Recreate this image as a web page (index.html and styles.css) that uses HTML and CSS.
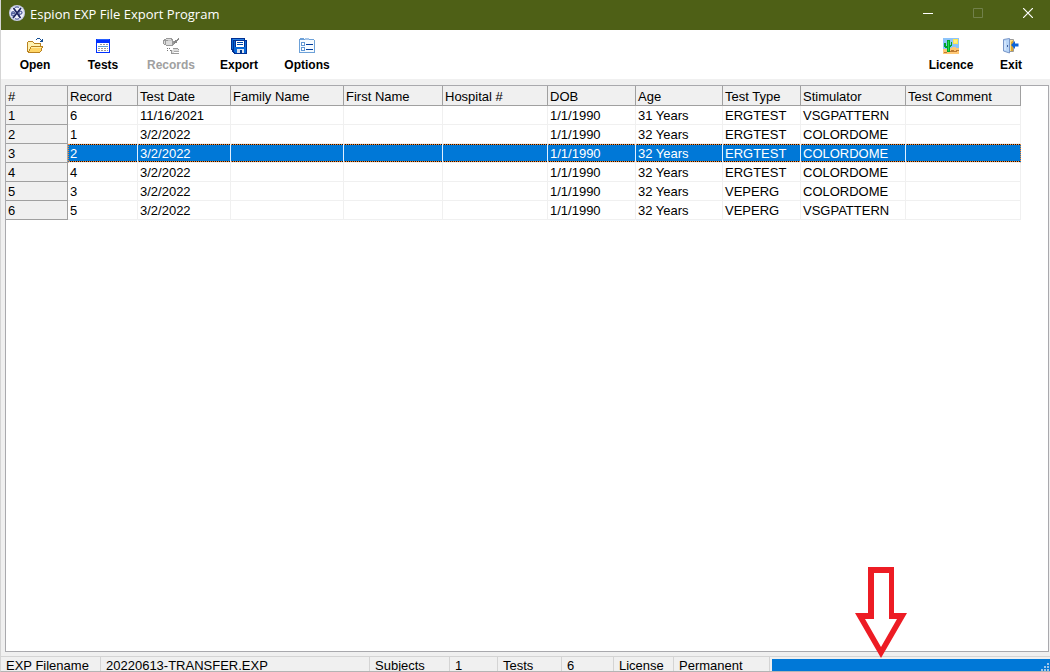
FILE: index.html
```html
<!DOCTYPE html>
<html lang="en">
<head>
    <meta charset="UTF-8">
    <meta name="viewport" content="width=device-width, initial-scale=1.0">
    <title>Espion EXP File Export Program</title>
    <link rel="stylesheet" href="styles.css">
</head>
<body>
    <div class="window">
        <header class="titlebar">
            <svg class="app-icon" width="16" height="16" viewBox="0 0 16 16">
                <circle cx="8" cy="8" r="8" fill="#c8cde8"/>
                <circle cx="8" cy="8" r="6.8" fill="#f0f2fb"/>
                <g fill="none" stroke="#5563a0" stroke-width="1.3">
                    <path d="M2.5 8.500h3.200c0-2.500-3.200-2.500-3.200.3s2.200 2.200 3.200 1.200M10 11.500V5.500M10 6.500c3.500-1.500 4.500 3 0 3M6 2.500c1.500-1 2.500-1 4 0M6 13.500c1.500 1 2.500 1 4 0"/>
                    <path d="M4.500 3l7 10M12 3L4 13" stroke="#1e2560" stroke-width="1.7"/>
                </g>
            </svg>
            <h1 class="title">Espion EXP File Export Program</h1>
            <div class="window-buttons">
                <button type="button" aria-label="Minimize">
                    <svg width="10" height="10" viewBox="0 0 10 10"><path d="M0 5.5h10" stroke="#fff"/></svg>
                </button>
                <button type="button" aria-label="Maximize" disabled>
                    <svg width="10" height="10" viewBox="0 0 10 10"><path d="M.5.5h9v9h-9z" fill="none" stroke="#71804a"/></svg>
                </button>
                <button type="button" aria-label="Close">
                    <svg width="10" height="10" viewBox="0 0 10 10"><path d="M0 0l10 10M10 0L0 10" stroke="#fff" stroke-width="1.2"/></svg>
                </button>
            </div>
        </header>

        <nav class="toolbar">
            <button type="button" class="tool">
                <svg width="16" height="16" viewBox="0 0 16 16" shape-rendering="crispEdges">
                    <path d="M10 0h3v1h1v1h1V1h1v3h-3V3h1V2h-1V1h-3v1H9V1h1z" fill="#164f94"/>
                    <path d="M1 3h5v1h1v1h7v3h2v2h-1v3h-1v1h-1v1H1v-1H0V4h1z" fill="#b98220"/>
                    <path d="M1 4h5v1h1v1h6v2H4v1H3v2H2v2H1z" fill="#fff2b0"/>
                    <path d="M4 9h11v1h-1v3h-1v1H2v-1h1v-2h1z" fill="#ffd566"/>
                    <path d="M4 9h10v1H4z" fill="#fff0a8"/>
                </svg>
                <span>Open</span>
            </button>
            <button type="button" class="tool">
                <svg width="16" height="16" viewBox="0 0 16 16" shape-rendering="crispEdges">
                    <path d="M1 1h14v14H1z" fill="#0030ff"/>
                    <path d="M2 5h12v9H2z" fill="#fff"/>
                    <path d="M5 6.500h8M3 10.500h10M3 12.500h10" stroke="#999" stroke-dasharray="2 1"/>
                    <path d="M3 8.500h10" stroke="#5b9bd5"/>
                    <path d="M2 1h12v1H2z" fill="#2860ff"/>
                </svg>
                <span>Tests</span>
            </button>
            <button type="button" class="tool" disabled>
                <svg width="16" height="16" viewBox="0 0 16 16" shape-rendering="crispEdges">
                    <path d="M3 0h6v1h1v2h1v4h-1v1H3V7H1V6H0V2h1V1h2z" fill="#999"/>
                    <path d="M3 1h5v1H3zM1 3h1v3H1zM3 3h6v4H3z" fill="#dcdcdc"/>
                    <path d="M5 2h4v1H5z" fill="#c4c4c4"/>
                    <path d="M15 0h1v2h-1v1h-1v2h-2v1h-1V3h1V2h2V1h1z" fill="#888"/>
                    <path d="M4 10h1v1H4zM6 10h1v1H6zM7 12h1v1H7zM4 12h1v1H4z" fill="#777"/>
                    <path d="M10 10h5v1h1v1h-1v-1h-5v1H9v3h7v1H8v-4h2z" fill="#999"/>
                    <path d="M10 11h5v1h1v1h-5v2H9v-3h1z" fill="#dcdcdc"/>
                    <path d="M11 13h5v1h-5z" fill="#aaa"/>
                </svg>
                <span>Records</span>
            </button>
            <button type="button" class="tool">
                <svg width="16" height="16" viewBox="0 0 16 16" shape-rendering="crispEdges">
                    <path d="M0 0h14v2h2v14H3v-1H2v-1H1v-2H0z" fill="#002f91"/>
                    <path d="M1 1h1v10H1zM3 3h1v11H3zM4 9h11v6H4z" fill="#0868d8"/>
                    <path d="M2 1h11v1H2z" fill="#2b83e6"/>
                    <path d="M5 3h8v6H5z" fill="#fff"/>
                    <path d="M6 4.500h6M6 6.500h6" stroke="#0048ad"/>
                    <path d="M6 11h7v4H6z" fill="#dce2ee"/>
                    <path d="M9 12h2v3H9z" fill="#00398f"/>
                    <path d="M14 3h1v6h-1z" fill="#0868d8"/>
                </svg>
                <span>Export</span>
            </button>
            <button type="button" class="tool">
                <svg width="16" height="16" viewBox="0 0 16 16" shape-rendering="crispEdges">
                    <path d="M1 0h4v1h10v1h1v13H0V1h1z" fill="#6da1d8"/>
                    <path d="M1 2h14v12H1z" fill="#f6fbff"/>
                    <path d="M6 0h4v2H6z" fill="#a7c7ea"/>
                    <path d="M2.500 4.500h3v3h-3zM2.500 9.500h3v3h-3z" fill="#fff" stroke="#6197d4"/>
                    <path d="M7 6.500h7M7 11.500h7" stroke="#003b9a"/>
                </svg>
                <span>Options</span>
            </button>
            <div class="toolbar-end">
                <button type="button" class="tool">
                    <svg width="16" height="16" viewBox="0 0 16 16" shape-rendering="crispEdges">
                        <path d="M0 0h16v16H0z" fill="#8dc4fa"/>
                        <path d="M0 11h4v-1h5V9h4v1h3v6H0z" fill="#ffc875"/>
                        <path d="M10 1h5v5h-5z" fill="#ffe650"/>
                        <path d="M11 2h3v3h-3z" fill="#fff183"/>
                        <path d="M4 2h3v5h1V4h1v4H8v1H7v5H4v-4H2V9H1V5h2v3h1z" fill="#00a52d"/>
                        <path d="M5 3h1v10H5z" fill="#25df4c"/>
                        <path d="M8 12h3v1h3v1H7v-1h1zM1 14h3v1H1zM13 12h3v1h-3z" fill="#bc7930"/>
                    </svg>
                    <span>Licence</span>
                </button>
                <button type="button" class="tool">
                    <svg width="16" height="16" viewBox="0 0 16 16">
                        <path d="M5.500 1.500h5v12h-5z" fill="#ffe28a" stroke="#9a9a9a"/>
                        <path d="M8 13V4l2-1.500V13z" fill="#d7a534"/>
                        <path d="M.5 1.500L6.500.5v14.500l-6-2z" fill="#b8d5f7" stroke="#7896c8"/>
                        <path d="M2 3v9" stroke="#e9f3ff"/>
                        <path d="M4.500 7v2" stroke="#405f9c"/>
                        <path d="M15.500 5.500H12V3L8 7l4 4V8.500h3.500z" fill="#0a62d8"/>
                    </svg>
                    <span>Exit</span>
                </button>
            </div>
        </nav>

        <main class="content">
            <table class="grid">
                <colgroup>
                    <col class="col-num">
                    <col class="col-record">
                    <col class="col-date">
                    <col class="col-family">
                    <col class="col-first">
                    <col class="col-hospital">
                    <col class="col-dob">
                    <col class="col-age">
                    <col class="col-type">
                    <col class="col-stim">
                    <col class="col-comment">
                </colgroup>
                <thead>
                    <tr><th>#</th><th>Record</th><th>Test Date</th><th>Family Name</th><th>First Name</th><th>Hospital #</th><th>DOB</th><th>Age</th><th>Test Type</th><th>Stimulator</th><th>Test Comment</th></tr>
                </thead>
                <tbody>
                    <tr><th>1</th><td>6</td><td>11/16/2021</td><td></td><td></td><td></td><td>1/1/1990</td><td>31 Years</td><td>ERGTEST</td><td>VSGPATTERN</td><td></td></tr>
                    <tr><th>2</th><td>1</td><td>3/2/2022</td><td></td><td></td><td></td><td>1/1/1990</td><td>32 Years</td><td>ERGTEST</td><td>COLORDOME</td><td></td></tr>
                    <tr class="selected"><th>3</th><td>2</td><td>3/2/2022</td><td></td><td></td><td></td><td>1/1/1990</td><td>32 Years</td><td>ERGTEST</td><td>COLORDOME</td><td></td></tr>
                    <tr><th>4</th><td>4</td><td>3/2/2022</td><td></td><td></td><td></td><td>1/1/1990</td><td>32 Years</td><td>ERGTEST</td><td>COLORDOME</td><td></td></tr>
                    <tr><th>5</th><td>3</td><td>3/2/2022</td><td></td><td></td><td></td><td>1/1/1990</td><td>32 Years</td><td>VEPERG</td><td>COLORDOME</td><td></td></tr>
                    <tr><th>6</th><td>5</td><td>3/2/2022</td><td></td><td></td><td></td><td>1/1/1990</td><td>32 Years</td><td>VEPERG</td><td>VSGPATTERN</td><td></td></tr>
                </tbody>
            </table>
        </main>

        <footer class="statusbar">
            <span class="panel panel-label">EXP Filename</span>
            <span class="panel panel-file">20220613-TRANSFER.EXP</span>
            <span class="panel panel-subjects">Subjects</span>
            <span class="panel panel-subject-count">1</span>
            <span class="panel panel-tests">Tests</span>
            <span class="panel panel-test-count">6</span>
            <span class="panel panel-license">License</span>
            <span class="panel panel-permanent">Permanent</span>
            <progress class="progress" value="100" max="100" aria-label="Export progress"></progress>
            <svg class="grip" width="8" height="8" viewBox="0 0 8 8" shape-rendering="crispEdges">
                <path d="M6 0h2v2H6zM3 3h2v2H3zM6 3h2v2H6zM0 6h2v2H0zM3 6h2v2H3zM6 6h2v2H6z" fill="#9cc4e8"/>
            </svg>
        </footer>

        <!-- arrow pointing at the progress bar -->
        <svg class="arrow" width="52" height="91" viewBox="0 0 52 91">
            <path d="M13 0h26v46h13L26 91 0 46h13z" fill="#ed1c24"/>
            <path d="M19 6h15v46h8L26 80 10 52h9z" fill="#fff"/>
        </svg>
    </div>
</body>
</html>
```

FILE: styles.css
```css
* {
    box-sizing: border-box;
}
body {
    margin: 0;
    font-family: "Liberation Sans", Arial, sans-serif;
    font-size: 13px;
    color: #000;
}
button {
    padding: 0;
    border: none;
    background: none;
    font: inherit;
    color: inherit;
}
.window {
    position: relative;
    display: flex;
    flex-direction: column;
    height: 100vh;
    overflow: hidden;
    background: #f0f0f0;
    border-left: 1px solid #d4d4d4;
    border-bottom: 1px solid #b4b4b4;
}

/* title bar */
.titlebar {
    display: flex;
    align-items: center;
    flex: none;
    height: 30px;
    padding-left: 8px;
    padding-bottom: 2px;
    background: #4e6016;
    color: #fff;
}
.app-icon {
    margin-bottom: 2px;
}
.title {
    flex: 1;
    margin: 0 0 0 5px;
    font-family: "Open Sans", "Segoe UI", sans-serif;
    font-size: 13px;
    font-weight: 400;
}
.window-buttons {
    display: flex;
    gap: 6px;
    padding-bottom: 2px;
}
.window-buttons button {
    display: flex;
    align-items: center;
    justify-content: center;
    width: 44px;
    height: 26px;
}

/* toolbar */
.toolbar {
    display: flex;
    flex: none;
    height: 49px;
    background: #fff;
}
.tool {
    display: flex;
    flex-direction: column;
    align-items: center;
    gap: 4px;
    width: 68px;
    padding-top: 8px;
    font-size: 12px;
    font-weight: 700;
    line-height: 14px;
}
.tool:disabled {
    color: #a0a0a0;
}
.toolbar-end {
    display: flex;
    margin-left: auto;
    padding-right: 9px;
}
.toolbar-end .tool {
    width: 60px;
}

/* record grid */
.content {
    flex: 1;
    min-height: 0;
    margin: 6px 1px 4px 4px;
    background: #fff;
    border: 1px solid #a9a9ad;
    overflow: hidden;
}
.grid {
    width: 1015px;
    table-layout: fixed;
    border-collapse: separate;
    border-spacing: 0;
}
.grid th,
.grid td {
    height: 19px;
    padding: 2px 0 0 2px;
    font-weight: 400;
    line-height: 16px;
    text-align: left;
    white-space: nowrap;
    border-right: 1px solid #f0f0f0;
    border-bottom: 1px solid #f0f0f0;
}
.grid th {
    background: #f0f0f0;
    border-color: #a0a0a0;
}
.grid thead th {
    height: 20px;
    padding-top: 3px;
}
.col-num { width: 62px; }
.col-record { width: 70px; }
.col-date { width: 93px; }
.col-family { width: 113px; }
.col-first { width: 99px; }
.col-hospital { width: 105px; }
.col-dob { width: 88px; }
.col-age { width: 87px; }
.col-type { width: 78px; }
.col-stim { width: 105px; }
.col-comment { width: 115px; }

/* selected row with its dotted focus rectangle */
.grid .selected td {
    color: #fff;
    background-color: #0078d7;
    background-image:
        repeating-linear-gradient(90deg, #ff8728 0 1px, #101010 1px 2px),
        repeating-linear-gradient(90deg, #ff8728 0 1px, #101010 1px 2px);
    background-size: 100% 1px;
    background-position: left top, left bottom;
    background-repeat: no-repeat;
    border-right-color: #e0f0ff;
}
.grid .selected td:nth-child(2) {
    border-left: 1px dotted #ff8728;
    padding-left: 1px;
}
.grid .selected td:last-child {
    border-right: 1px dotted #ff8728;
}

/* status bar */
.statusbar {
    position: relative;
    display: flex;
    flex: none;
    height: 15px;
    border-top: 1px solid #d4d4d4;
    overflow: hidden;
}
.panel {
    flex: none;
    padding: 1px 0 0 5px;
    line-height: 15px;
    white-space: nowrap;
    border-right: 1px solid #d4d4d4;
}
.panel-label { width: 100px; }
.panel-file { width: 269px; }
.panel-subjects { width: 80px; }
.panel-subject-count { width: 48px; }
.panel-tests { width: 64px; }
.panel-test-count { width: 52px; }
.panel-license { width: 60px; }
.panel-permanent { width: 96px; }
.progress {
    flex: 1;
    min-width: 0;
    height: 12px;
    margin: 2px 0 0 2px;
    border: none;
    appearance: none;
    background: #0078d7;
}
.progress::-webkit-progress-bar,
.progress::-webkit-progress-value {
    background: #0078d7;
}
.grip {
    position: absolute;
    right: 1px;
    bottom: 0;
}

.arrow {
    position: absolute;
    right: 143px;
    bottom: 13px;
}
```
